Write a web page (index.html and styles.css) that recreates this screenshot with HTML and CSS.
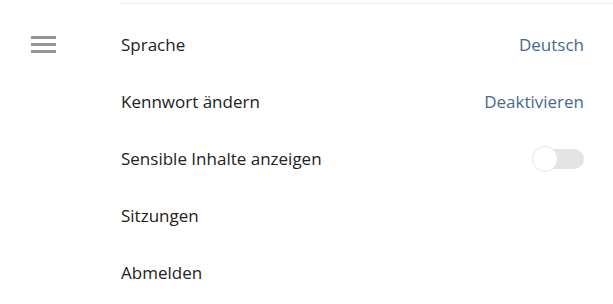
FILE: index.html
```html
<!DOCTYPE html>
<html lang="de">
<head>
<meta charset="utf-8">
<link rel="stylesheet" href="styles.css">
</head>
<body>
<div class="page">
  <aside class="side">
    <button class="menu" aria-label="Menü">
      <span></span><span></span><span></span>
    </button>
  </aside>
  <main class="content">
    <ul class="list">
      <li class="row"><span class="label">Sprache</span><span class="value">Deutsch</span></li>
      <li class="row"><span class="label">Kennwort ändern</span><span class="value">Deaktivieren</span></li>
      <li class="row"><span class="label">Sensible Inhalte anzeigen</span><span class="toggle"><span class="knob"></span></span></li>
      <li class="row"><span class="label">Sitzungen</span></li>
      <li class="row"><span class="label">Abmelden</span></li>
    </ul>
  </main>
</div>
</body>
</html>
```
FILE: styles.css
```css
html, body {
  margin: 0;
  padding: 0;
  background: #ffffff;
}
body {
  font-family: "Open Sans", "Noto Sans", sans-serif;
  font-size: 17px;
  color: #222222;
}
.page {
  display: flex;
  height: 304px;
  overflow: hidden;
}
.side {
  width: 120px;
  flex: none;
  padding-top: 36px;
  padding-left: 31px;
  box-sizing: border-box;
}
.menu {
  display: flex;
  flex-direction: column;
  gap: 4px;
  width: 25px;
  padding: 0;
  border: 0;
  background: none;
}
.menu span {
  display: block;
  width: 25px;
  height: 3px;
  background: #959595;
}
.content {
  flex: 1;
  padding-top: 3px;
}
.list {
  list-style: none;
  margin: 0;
  padding: 12px 29px 0 0;
  border-top: 1px solid #ebebeb;
}
.row {
  height: 57px;
  display: flex;
  align-items: center;
  justify-content: space-between;
}
.label {
  padding-left: 1px;
}
.value {
  color: #46698f;
}
.toggle {
  position: relative;
  width: 52px;
  height: 20px;
  border-radius: 10px;
  background: #e4e4e4;
}
.knob {
  position: absolute;
  left: 0;
  top: -3px;
  width: 26px;
  height: 26px;
  border-radius: 50%;
  background: #ffffff;
  border: 1px solid #e6e6e6;
  box-sizing: border-box;
}
```
